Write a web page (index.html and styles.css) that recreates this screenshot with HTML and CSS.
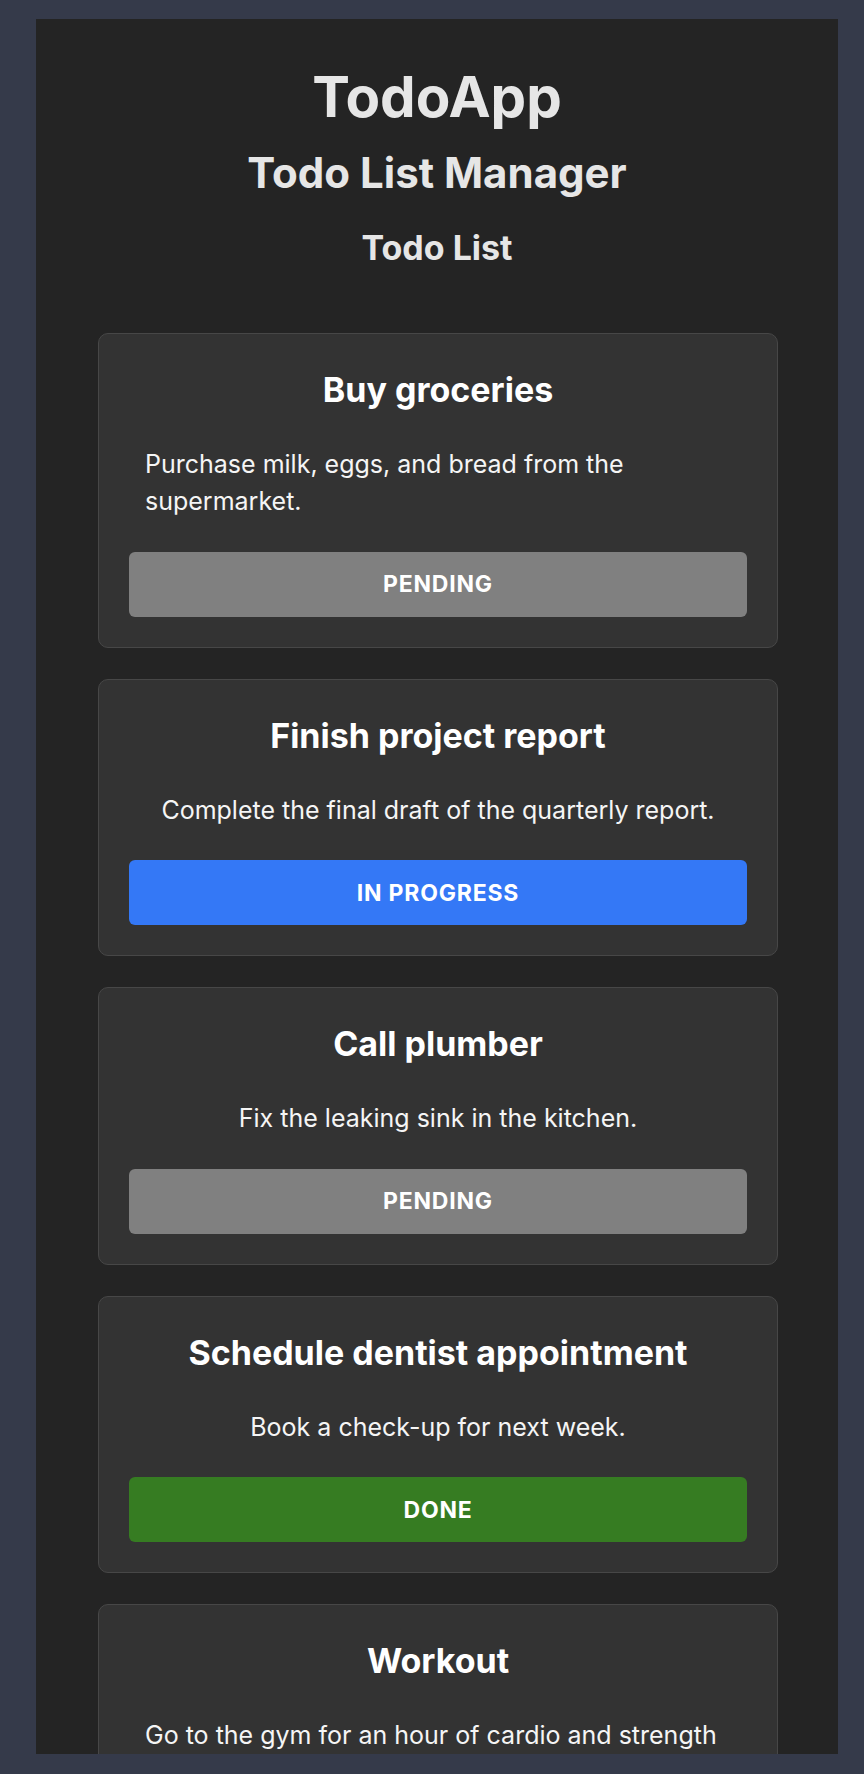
FILE: index.html
```html
<!DOCTYPE html>
<html lang="en">
<head>
<meta charset="utf-8">
<title>TodoApp</title>
<link rel="stylesheet" href="styles.css">
</head>
<body>
<div class="app">
  <header class="app-header">
    <h1 class="app-title">TodoApp</h1>
    <h2 class="app-subtitle">Todo List Manager</h2>
    <h3 class="list-title">Todo List</h3>
  </header>
  <ul class="todo-list">
    <li class="todo-card">
      <h4 class="todo-title">Buy groceries</h4>
      <div class="todo-desc-wrap"><p class="todo-desc">Purchase milk, eggs, and bread from the supermarket.</p></div>
      <button class="status status-pending">PENDING</button>
    </li>
    <li class="todo-card">
      <h4 class="todo-title">Finish project report</h4>
      <div class="todo-desc-wrap"><p class="todo-desc">Complete the final draft of the quarterly report.</p></div>
      <button class="status status-progress">IN PROGRESS</button>
    </li>
    <li class="todo-card">
      <h4 class="todo-title">Call plumber</h4>
      <div class="todo-desc-wrap"><p class="todo-desc">Fix the leaking sink in the kitchen.</p></div>
      <button class="status status-pending">PENDING</button>
    </li>
    <li class="todo-card">
      <h4 class="todo-title">Schedule dentist appointment</h4>
      <div class="todo-desc-wrap"><p class="todo-desc">Book a check-up for next week.</p></div>
      <button class="status status-done">DONE</button>
    </li>
    <li class="todo-card">
      <h4 class="todo-title">Workout</h4>
      <div class="todo-desc-wrap"><p class="todo-desc">Go to the gym for an hour of cardio and strength training.</p></div>
      <button class="status status-pending">PENDING</button>
    </li>
  </ul>
</div>
</body>
</html>
```
FILE: styles.css
```css
* {
  box-sizing: border-box;
}

html, body {
  margin: 0;
}

body {
  background: #353a4a;
  padding: 19px 26px 20px 36px;
  font-family: "Inter", "Noto Sans", sans-serif;
  color: #f2f2f2;
}

.app {
  background: #242424;
  height: 1735px;
  overflow: hidden;
  padding-top: 43.5px;
}

.app-header {
  text-align: center;
  color: #e6e6e6;
}

.app-title {
  margin: 0;
  font-size: 56.5px;
  font-weight: 700;
  line-height: 1.21;
}

.app-subtitle {
  margin: 17px 0 0;
  font-size: 42px;
  font-weight: 700;
  line-height: 1.21;
}

.list-title {
  margin: 28px 0 0;
  font-size: 34px;
  font-weight: 700;
  line-height: 1.21;
}

.todo-list {
  list-style: none;
  margin: 65px 0 0 62px;
  padding: 0;
  width: 680px;
  display: flex;
  flex-direction: column;
  gap: 31px;
}

.todo-card {
  background: #333333;
  border: 1px solid #474747;
  border-radius: 10px;
  padding: 30px;
  text-align: center;
}

.todo-title {
  margin: 6px 0 0;
  font-size: 34px;
  font-weight: 700;
  line-height: 40px;
  color: #ffffff;
}

.todo-desc-wrap {
  padding: 0 16px;
  margin-top: 36px;
}

.todo-desc {
  display: inline-block;
  margin: 0;
  text-align: left;
  font-size: 25px;
  line-height: 37.5px;
  color: #f5f5f5;
}

.status {
  display: block;
  width: 100%;
  margin-top: 31px;
  height: 65px;
  border: none;
  border-radius: 6px;
  font-family: inherit;
  font-size: 23px;
  font-weight: 700;
  letter-spacing: 0.8px;
  color: #ffffff;
}

.status-pending {
  background: #808080;
}

.status-progress {
  background: #3478f6;
}

.status-done {
  background: #367c22;
}
```
